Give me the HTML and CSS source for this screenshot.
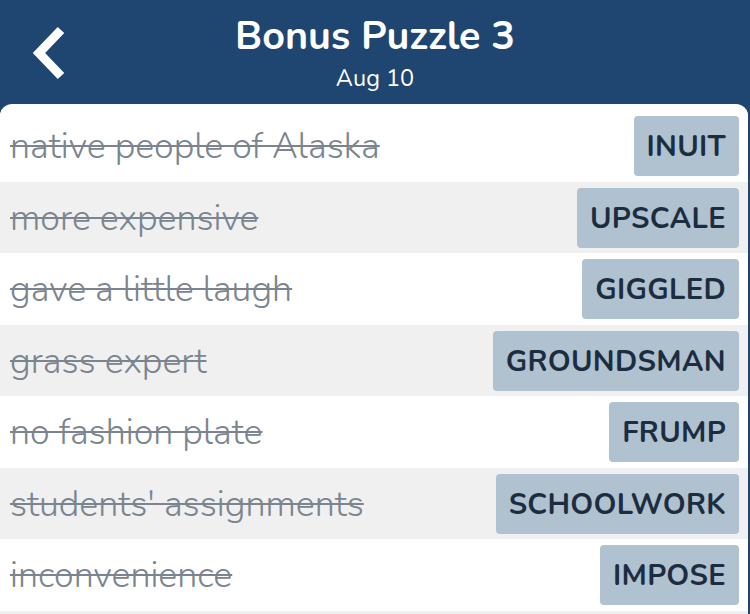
FILE: index.html
```html
<!DOCTYPE html>
<html>
<head>
<meta charset="utf-8">
<link rel="stylesheet" href="styles.css">
</head>
<body>
<div class="app">
  <header class="header">
    <svg class="back" width="40" height="56" viewBox="0 0 40 56">
      <polyline points="31,5 9,28 31,51" fill="none" stroke="#fff" stroke-width="9" stroke-linejoin="miter" stroke-linecap="butt"/>
    </svg>
    <div class="titles">
      <div class="title">Bonus Puzzle 3</div>
      <div class="subtitle">Aug 10</div>
    </div>
  </header>
  <main class="card">
    <div class="row"><span class="clue">native people of Alaska</span><span class="answer">INUIT</span></div>
    <div class="row alt"><span class="clue">more expensive</span><span class="answer">UPSCALE</span></div>
    <div class="row"><span class="clue">gave a little laugh</span><span class="answer">GIGGLED</span></div>
    <div class="row alt"><span class="clue">grass expert</span><span class="answer">GROUNDSMAN</span></div>
    <div class="row"><span class="clue">no fashion plate</span><span class="answer">FRUMP</span></div>
    <div class="row alt"><span class="clue">students' assignments</span><span class="answer">SCHOOLWORK</span></div>
    <div class="row"><span class="clue">inconvenience</span><span class="answer">IMPOSE</span></div>
    <div class="row alt"></div>
  </main>
</div>
</body>
</html>
```

FILE: styles.css
```css
html, body {
  margin: 0;
  padding: 0;
  background: #1f4670;
  font-family: "Nunito", Lato, "Open Sans", sans-serif;
  overflow: hidden;
}
.app {
  width: 750px;
  height: 614px;
  display: flex;
  flex-direction: column;
}
.header {
  height: 104px;
  flex: none;
  position: relative;
  display: flex;
  justify-content: center;
  color: #fff;
}
.back {
  position: absolute;
  left: 30px;
  top: 25px;
}
.titles {
  display: flex;
  flex-direction: column;
  align-items: center;
  padding-top: 12px;
}
.title {
  font-size: 39.5px;
  font-weight: 700;
  line-height: 48px;
}
.subtitle {
  font-size: 23.5px;
  line-height: 28px;
  margin-top: 4px;
}
.card {
  flex: 1;
  background: #fff;
  border-radius: 12px 12px 0 0;
  margin-right: 2px;
  padding-top: 6px;
  overflow: hidden;
}
.row {
  height: 71.5px;
  display: flex;
  align-items: flex-start;
  justify-content: space-between;
  padding: 6px 9px 0 10px;
  box-sizing: border-box;
  background: #fff;
}
.row.alt {
  background: #f0f0f0;
}
.clue {
  font-size: 35.8px;
  font-weight: 300;
  line-height: 62px;
  color: #7b858f;
  text-decoration: line-through;
  text-decoration-thickness: 2px;
}
.answer {
  height: 60px;
  line-height: 60px;
  padding: 0 13px;
  background: #b0c1d0;
  border-radius: 4px;
  color: #1c2d40;
  font-size: 29.2px;
  font-weight: 700;
  letter-spacing: 0.3px;
}
```
